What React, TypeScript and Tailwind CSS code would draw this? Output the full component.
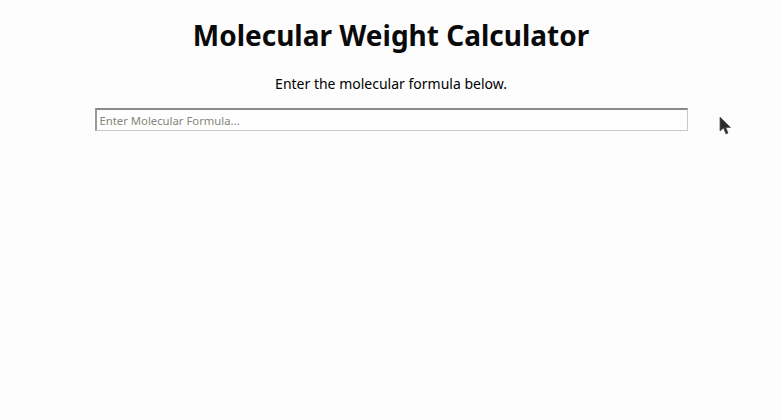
import * as React from "react";

function Cursor(): React.JSX.Element {
  return (
    <svg width="14" height="22" viewBox="0 0 14 22" className="absolute left-[719px] top-[116px]" aria-hidden="true">
      <path d="M1 1 L1 15 L4.5 12 L7 18 L9 17 L6.8 11.5 L11.5 11.5 Z" fill="#2b2b2b" stroke="#555" strokeWidth="0.8" />
    </svg>
  );
}

export default function App(): React.JSX.Element {
  return (
    <div className="relative min-h-[420px] w-full bg-[#fdfdfe] font-['Noto_Sans',sans-serif] text-black">
      <div className="flex flex-col items-center pt-[15px]">
        <h1 className="text-[28px] font-bold leading-[40px] text-[#0a0a0a]">Molecular Weight Calculator</h1>
        <p className="mt-[19px] text-[14px] leading-[20px]">Enter the molecular formula below.</p>
        <input
          type="text"
          placeholder="Enter Molecular Formula..."
          className="mt-[14px] h-[23px] w-[593px] border border-t-2 border-l-2 border-[#c8c8c8] border-t-[#8a8a8a] border-l-[#9a9a9a] bg-[#fefefe] px-[3px] text-[11.3px] outline-none placeholder:text-[#86867a]"
        />
      </div>
      <Cursor />
    </div>
  );
}
